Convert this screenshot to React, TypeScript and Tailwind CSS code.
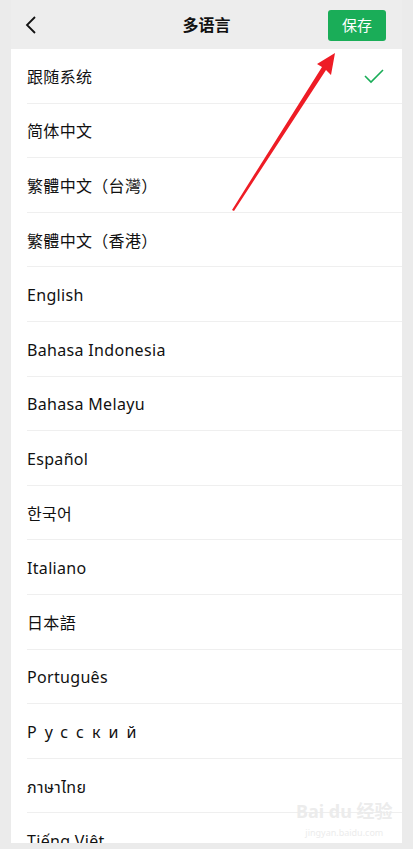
const languages = [
  '跟随系统',
  '简体中文',
  '繁體中文（台灣）',
  '繁體中文（香港）',
  'English',
  'Bahasa Indonesia',
  'Bahasa Melayu',
  'Español',
  '한국어',
  'Italiano',
  '日本語',
  'Português',
  'Русский',
  'ภาษาไทย',
  'Tiếng Việt',
]

export default function App() {
  const selected = 0

  return (
    <div
      className="relative h-[849px] w-[413px] overflow-hidden bg-[#ebebeb] px-[11px] pb-[6px]"
      style={{ fontFamily: '"Noto Sans", "Noto Sans CJK SC", "Noto Sans Thai", sans-serif' }}
    >
      <div className="flex h-full flex-col overflow-hidden bg-white">
        {/* header */}
        <div className="relative flex h-[49px] shrink-0 items-center justify-center bg-[#ededed]">
          <button className="absolute left-[14px] top-[16px]">
            <svg width="12" height="18" viewBox="0 0 12 18" fill="none">
              <polyline points="10,1 2,9 10,17" stroke="#111" strokeWidth="1.8" />
            </svg>
          </button>
          <h1 className="text-[16px] font-bold text-[#111]">多语言</h1>
          <button className="absolute right-[16px] top-[10px] h-[31px] w-[58px] rounded-[3px] bg-[#1aad58] text-[15px] text-white">
            保存
          </button>
        </div>

        {/* list */}
        <div className="flex flex-col">
          {languages.map((lang, i) => (
            <div
              key={lang}
              className="ml-[16px] flex h-[54.6px] shrink-0 items-center justify-between border-b border-[#efefef] pr-[18px] pt-[2px]"
            >
              <span
                className={
                  lang === 'Русский'
                    ? 'text-[16px] tracking-[0.5em] text-[#111]'
                    : 'text-[16px] tracking-[0.02em] text-[#111]'
                }
              >
                {lang}
              </span>
              {i === selected && (
                <svg width="20" height="15" viewBox="0 0 20 15" fill="none">
                  <polyline points="1,7 7,13 19,1" stroke="#1aad58" strokeWidth="1.6" />
                </svg>
              )}
            </div>
          ))}
        </div>
      </div>

      {/* annotation arrow */}
      <svg className="pointer-events-none absolute left-0 top-0" width="413" height="849">
        <polygon
          points="335,53 331,75 326,70 234,211 232,210 322,67 317,64"
          fill="#ee1c25"
        />
      </svg>

      {/* watermark */}
      <div className="pointer-events-none absolute left-[296px] top-[802px] flex flex-col items-center text-[#ececec]">
        <span className="text-[18px] font-bold leading-none">Bai du 经验</span>
        <span className="mt-[8px] text-[9px] leading-none">jingyan.baidu.com</span>
      </div>
    </div>
  )
}
